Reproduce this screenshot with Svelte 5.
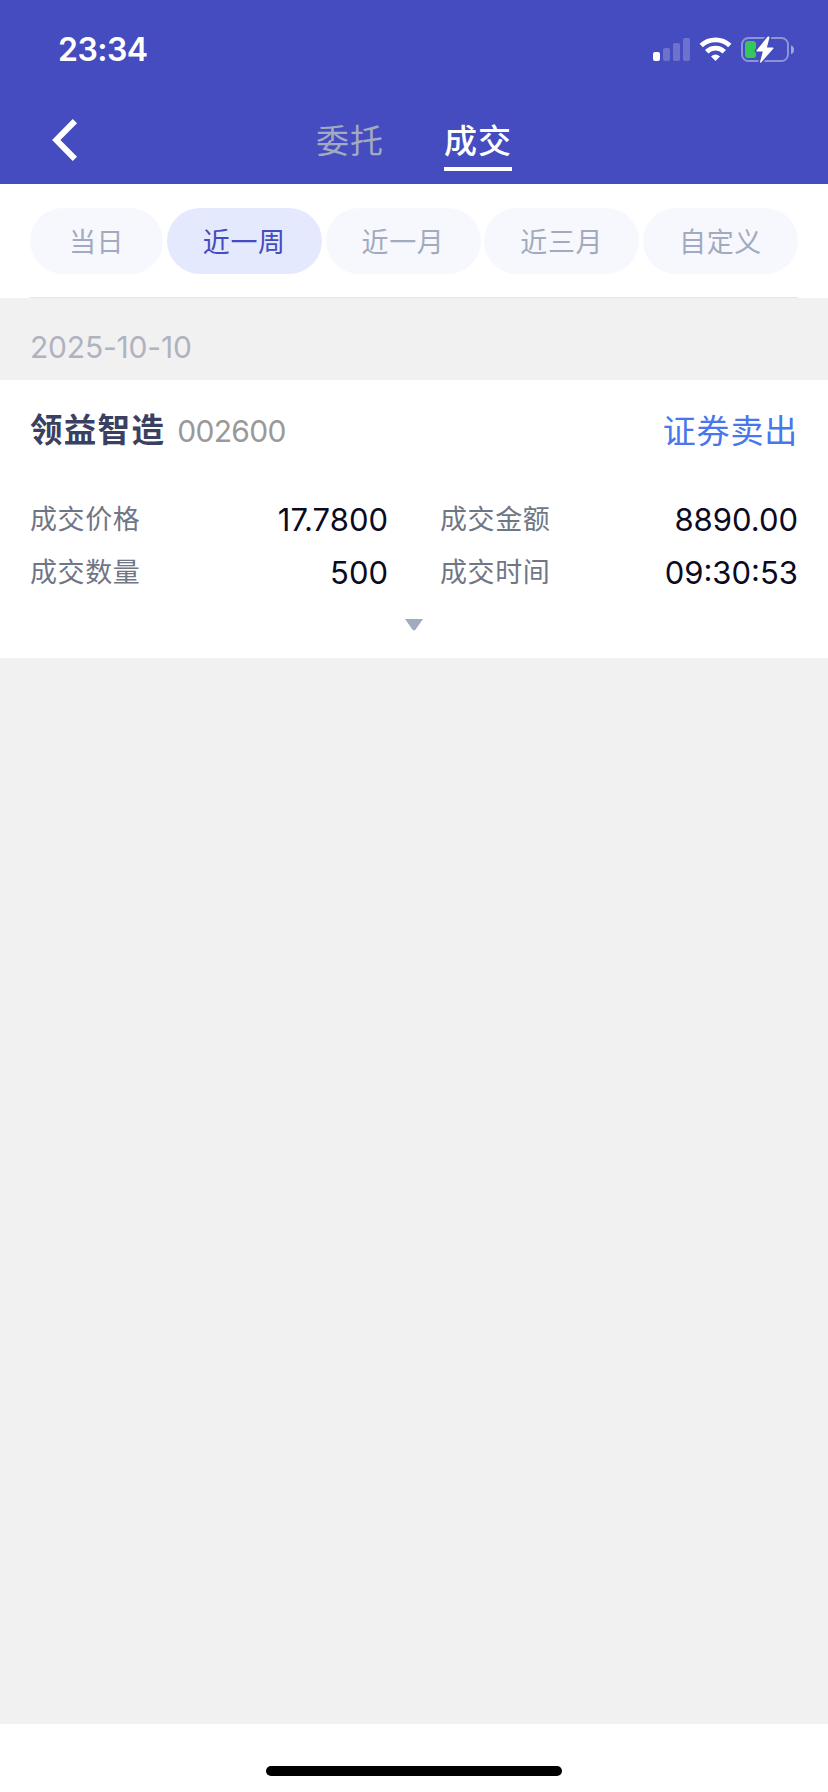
<script lang="ts">
  let tabs = ['委托', '成交'];
  let activeTab = $state('成交');

  let ranges = ['当日', '近一周', '近一月', '近三月', '自定义'];
  let activeRange = $state('近一周');

  const deal = {
    date: '2025-10-10',
    name: '领益智造',
    code: '002600',
    side: '证券卖出',
    fields: [
      { label: '成交价格', value: '17.7800' },
      { label: '成交金额', value: '8890.00' },
      { label: '成交数量', value: '500' },
      { label: '成交时间', value: '09:30:53' }
    ]
  };
</script>

<div class="screen">
  <header>
    <div class="status-bar">
      <span class="clock">23:34</span>
      <svg class="status-icons" width="144" height="30" viewBox="0 0 144 30" aria-hidden="true">
        <!-- signal -->
        <g fill="#fff">
          <rect x="3" y="17" width="7" height="9" rx="2" />
          <rect x="13" y="13" width="7" height="13" rx="2" opacity="0.22" />
          <rect x="23" y="8" width="7" height="18" rx="2" opacity="0.22" />
          <rect x="33" y="3" width="7" height="23" rx="2" opacity="0.22" />
        </g>
        <!-- wifi -->
        <g fill="none" stroke="#fff" stroke-width="4.8">
          <path d="M51.2 10.6a20.6 20.6 0 0 1 28.6 0" />
          <path d="M56.7 16.7a12.6 12.6 0 0 1 17.6 0" />
        </g>
        <path fill="#fff" d="M65.5 26l-4.5-4.6q4.5-3.8 9 0z" />
        <!-- battery -->
        <rect x="92" y="3" width="46" height="23" rx="6.5" fill="none" stroke="#fff" stroke-width="2" opacity="0.4" />
        <path d="M141 10.2v9q3-1 3-4.5t-3-4.5z" fill="#fff" opacity="0.5" />
        <rect x="95" y="6" width="11" height="17" rx="3" fill="#35c759" />
        <path
          d="M117.8 1.6L106.4 15.4q-.5.9.5 1h5.9l-2.8 10.6q.2 1.2 1.3.3L123.4 13.5q.4-.9-.6-1h-5.9l2.6-10q-.2-1.6-1.7-.9z"
          fill="#fff"
          stroke="#444cbf"
          stroke-width="3.4"
          paint-order="stroke"
        />
      </svg>
    </div>

    <div class="nav">
      <button type="button" class="back" aria-label="返回">
        <svg width="26" height="42" viewBox="0 0 26 42">
          <path d="M22.9 2.1L4.3 21l18.6 18.9" fill="none" stroke="#fff" stroke-width="6" />
        </svg>
      </button>
      <div class="tabs">
        {#each tabs as tab}
          <button type="button" class="tab" class:active={tab === activeTab} onclick={() => (activeTab = tab)}>
            {tab}
          </button>
        {/each}
      </div>
    </div>
  </header>

  <div class="filters">
    <div class="chips">
      {#each ranges as range}
        <button type="button" class="chip" class:active={range === activeRange} onclick={() => (activeRange = range)}>
          {range}
        </button>
      {/each}
    </div>
  </div>

  <main>
    <div class="date">{deal.date}</div>
    <section class="deal">
      <div class="deal-head">
        <span class="name">{deal.name}</span>
        <span class="code">{deal.code}</span>
        <span class="side">{deal.side}</span>
      </div>
      <dl class="fields">
        {#each deal.fields as field}
          <div class="field">
            <dt>{field.label}</dt>
            <dd>{field.value}</dd>
          </div>
        {/each}
      </dl>
      <svg class="expand" width="18" height="12" viewBox="0 0 18 12" aria-hidden="true">
        <path d="M0 0h18l-7.4 10.4q-1.6 2-3.2 0z" fill="#a2aabf" />
      </svg>
    </section>
  </main>

  <footer>
    <div class="home-indicator"></div>
  </footer>
</div>

<style>
  :global(body) {
    background: #f1f1f1;
  }

  .screen {
    display: flex;
    flex-direction: column;
    width: 828px;
    height: 1792px;
    background: #f1f1f1;
    font-family: Inter, 'Noto Sans CJK SC', sans-serif;
  }

  button {
    margin: 0;
    padding: 0;
    border: none;
    background: transparent;
    font-family: inherit;
    cursor: pointer;
  }

  header {
    height: 184px;
    background: #444cbf;
  }

  .status-bar {
    display: flex;
    align-items: center;
    justify-content: space-between;
    height: 100px;
    padding: 0 34px 0 58px;
  }

  .clock {
    color: #fff;
    font-size: 32px;
    font-weight: 600;
    letter-spacing: -0.5px;
    line-height: 40px;
  }

  .nav {
    display: grid;
    grid-template-columns: 1fr auto 1fr;
    height: 84px;
  }

  .back {
    display: flex;
    align-items: flex-start;
    padding: 19px 0 0 52px;
  }

  .tabs {
    display: flex;
    gap: 60px;
    height: 71px;
  }

  .tab {
    box-sizing: border-box;
    width: 68px;
    padding-top: 15px;
    border-bottom: 4px solid transparent;
    color: #a2aabf;
    font-size: 33px;
    letter-spacing: 1px;
    line-height: 48px;
    white-space: nowrap;
  }

  .tab.active {
    border-color: #fff;
    color: #fff;
    font-weight: 500;
  }

  .filters {
    padding: 0 30px;
    background: #fff;
  }

  .chips {
    display: flex;
    justify-content: space-between;
    padding: 24px 0 23px;
    border-bottom: 1px solid #e6e6e6;
  }

  .chip {
    box-sizing: border-box;
    width: 155px;
    height: 66px;
    padding-top: 3px;
    border-radius: 33px;
    background: #f7f8fd;
    color: #a2aabf;
    font-size: 27px;
    letter-spacing: 0.6px;
    line-height: 63px;
  }

  .chip:first-child {
    width: 133px;
  }

  .chip.active {
    background: #e5e9fe;
    color: #444cbf;
  }

  main {
    flex: 1;
  }

  .date {
    height: 82px;
    padding: 0 30px;
    color: #b0b3bf;
    font-size: 30px;
    letter-spacing: -0.2px;
    line-height: 98px;
  }

  .deal {
    box-sizing: border-box;
    display: flex;
    flex-direction: column;
    height: 278px;
    padding: 26px 30px 0;
    background: #fff;
  }

  .deal-head {
    display: flex;
    align-items: center;
    line-height: 50px;
  }

  .name {
    color: #3a4060;
    font-size: 32.5px;
    font-weight: 700;
    letter-spacing: 1.3px;
  }

  .code {
    margin-left: 12px;
    color: #999;
    font-size: 30px;
    letter-spacing: -0.7px;
  }

  .side {
    margin-left: auto;
    color: #4876ec;
    font-size: 33px;
    letter-spacing: 0.8px;
  }

  .fields {
    display: grid;
    grid-template-columns: 1fr 1fr;
    column-gap: 52px;
    margin: 37px 0 0;
  }

  .field {
    display: flex;
    align-items: center;
    justify-content: space-between;
    height: 53px;
  }

  dt {
    padding-bottom: 5px;
    color: #6f7686;
    font-size: 27px;
    letter-spacing: 0.6px;
  }

  dd {
    margin: 0;
    color: #0b0a1e;
    font-size: 31px;
  }

  .expand {
    align-self: center;
    margin-top: 20px;
  }

  footer {
    display: flex;
    justify-content: center;
    height: 68px;
    background: #fff;
  }

  .home-indicator {
    width: 296px;
    height: 10px;
    margin-top: 42px;
    border-radius: 5px;
    background: #000;
  }
</style>
